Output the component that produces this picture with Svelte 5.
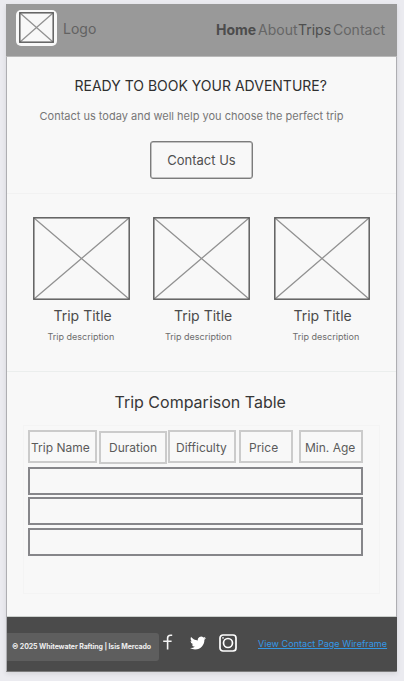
<script>
  const trips = [{ width: 97 }, { width: 97 }, { width: 96 }];
  const columns = ['Trip Name', 'Duration', 'Difficulty', 'Price', 'Min. Age'];
  const rows = [1, 2, 3];
</script>

{#snippet placeholder(w, h)}
  <svg class="ph" width={w} height={h} viewBox="0 0 {w} {h}">
    <path d="M1 1L{w - 1} {h - 1}M{w - 1} 1L1 {h - 1}" stroke="#929292" stroke-width="1.3" />
    <rect x=".8" y=".8" width={w - 1.6} height={h - 1.6} fill="none" stroke="#606060" stroke-width="1.5" />
  </svg>
{/snippet}

<main>
  <header>
    <div class="brand">
      <span class="mark">{@render placeholder(35, 31)}</span>
      <span class="name">Logo</span>
    </div>
    <nav>
      <span class="home">Home</span>
      <span class="about">About</span>
      <span class="trips-link">Trips</span>
      <span class="contact">Contact</span>
    </nav>
  </header>

  <section class="hero">
    <h1>READY TO BOOK YOUR ADVENTURE?</h1>
    <p>Contact us today and well help you choose the perfect trip</p>
    <button>Contact Us</button>
  </section>

  <section class="trips">
    {#each trips as trip, i}
      <article class="trip t{i}">
        {@render placeholder(trip.width, 83)}
        <h2>Trip Title</h2>
        <p>Trip description</p>
      </article>
    {/each}
  </section>

  <section class="compare">
    <h2>Trip Comparison Table</h2>
    <div class="table">
      <div class="head">
        {#each columns as label, i}
          <div class="cell c{i}">{label}</div>
        {/each}
      </div>
      {#each rows as row}
        <div class="row r{row}"></div>
      {/each}
    </div>
  </section>

  <footer>
    <div class="copy">© 2025 Whitewater Rafting | Isis Mercado</div>
    <div class="social">
      <svg class="fb" width="10" height="16" viewBox="0 0 10 16">
        <path d="M9.2 1.2H7.6Q4.6 1.2 4.6 4V15.5M.2 7.2H8.6" fill="none" stroke="#f4f4f4" stroke-width="1.6" />
      </svg>
      <svg class="tw" width="16" height="14" viewBox="0 2 24 20">
        <path fill="#fff" d="M23.95 4.57a10 10 0 01-2.82.77 4.96 4.96 0 002.16-2.72c-.95.55-2 .95-3.13 1.18a4.92 4.92 0 00-8.38 4.48C7.69 8.1 4.07 6.13 1.64 3.16a4.82 4.82 0 00-.67 2.48c0 1.7.87 3.2 2.19 4.09a4.9 4.9 0 01-2.23-.61v.06a4.92 4.92 0 003.95 4.83 5 5 0 01-2.21.08 4.94 4.94 0 004.6 3.42A9.87 9.87 0 010 19.54a13.99 13.99 0 007.56 2.21c9.05 0 14-7.5 14-13.98 0-.21 0-.42-.02-.63a9.94 9.94 0 002.41-2.57z" />
      </svg>
      <svg class="ig" width="18" height="18" viewBox="0 0 18 18">
        <rect x="1" y="1" width="16" height="16" rx="3" fill="none" stroke="#fff" stroke-width="1.7" />
        <circle cx="9" cy="9" r="4.5" fill="none" stroke="#fff" stroke-width="1.7" />
        <circle cx="4" cy="3.9" r=".8" fill="#fff" />
      </svg>
    </div>
    <span class="link">View Contact Page Wireframe</span>
  </footer>
</main>

<style>
  :global(body) { background: #ebebf0; font-family: Inter, "Liberation Sans", sans-serif; }
  main {
    box-sizing: border-box;
    width: 391px;
    height: 668px;
    margin: 0 0 0 6px;
    border: 1px solid #aeaeb2;
    border-top: 0;
    border-bottom: 1px solid #7c7c7c;
    background: #f8f8f8;
    box-shadow: 0 2px 5px #00000018;
    display: flex;
    flex-direction: column;
  }
  :global(#app) { padding-top: 4px; height: 677px; }
  h1, h2, p { margin: 0; font-weight: 400; white-space: nowrap; }
  .ph { display: block; }
  header {
    box-sizing: border-box;
    height: 53px;
    margin: 0 -1px;
    background: #999;
    border-bottom: 1px solid #b9b9b9;
    display: flex;
    justify-content: space-between;
  }
  .brand { display: flex; padding: 6px 0 0 10px; }
  .mark { box-sizing: border-box; width: 41px; height: 36px; padding: 2px 3px; border-radius: 5px; background: #f8f8f8; }
  .name { margin: 9px 0 0 6px; font-size: 14px; line-height: 20px; color: #626262; }
  nav { display: flex; padding: 16px 12px 0 0; font-size: 14px; line-height: 20px; color: #666; }
  nav span { white-space: nowrap; }
  .home { width: 42px; font-weight: 700; color: #4c4c4c; }
  .about { width: 40px; }
  .trips-link { width: 35px; color: #4e4e4e; }
  .contact { width: 52px; }

  .hero { box-sizing: border-box; height: 137px; padding-top: 19px; border-bottom: 1px solid #f2f2f2; }
  .hero h1 { margin-left: 67.5px; font-size: 14px; line-height: 20px; color: #2f2f2f; }
  .hero p { margin: 12px 0 0 32.5px; font-size: 11px; line-height: 16px; color: #767676; }
  button {
    display: block;
    box-sizing: border-box;
    width: 103px;
    height: 38px;
    margin: 17px 0 0 143px;
    padding: 0;
    border: 1px solid #7c7c7c;
    border-radius: 3px;
    box-shadow: inset 0 0 0 .5px #8c8c8c;
    background: #f8f8f8;
    font: 13px/20px Inter, sans-serif;
    color: #505050;
    white-space: nowrap;
  }

  .trips { box-sizing: border-box; height: 178px; padding: 23px 0 0 25.5px; border-bottom: 1px solid #ebeeed; display: flex; gap: 23.5px; }
  .trip { width: 97px; }
  .trip h2 { margin: 6px 0 0 21px; font-size: 14px; line-height: 20px; color: #4b4b4b; }
  .trip p { margin: 5px 0 0 15px; font-size: 9px; line-height: 12px; color: #6d6d6d; }
  .t1 p { margin-left: 12px; }
  .t2 h2 { margin-left: 20px; }
  .t2 p { margin-left: 19px; }

  .compare { box-sizing: border-box; height: 245px; padding: 19px 0 0 16px; border-bottom: 1px solid #ccd0cd; }
  .compare h2 { margin-left: 91.5px; font-size: 16px; line-height: 22px; color: #373737; }
  .table { box-sizing: border-box; width: 357px; height: 169px; margin-top: 12px; padding: 4px 0 0 4px; border: 1px solid #f4f4f4; }
  .head { display: flex; height: 34px; }
  .cell {
    box-sizing: border-box;
    height: 33px;
    border: 2px solid #cbcbcb;
    font-size: 12px;
    line-height: 31px;
    color: #5b5b5b;
    white-space: nowrap;
  }
  .c0 { width: 69px; padding-left: 1px; }
  .c1 { width: 68px; margin: 1px 0 0 2px; padding-left: 8px; line-height: 29px; }
  .c2 { width: 68px; margin-left: 1px; padding-left: 6px; }
  .c3 { width: 54px; margin-left: 3px; padding-left: 8px; }
  .c4 { width: 64px; margin-left: 6px; padding-left: 4px; }
  .row { box-sizing: border-box; width: 335px; height: 28px; margin-top: 3px; border: 2px solid #86868a; }
  .r2 { margin-top: 2px; }

  footer { height: 54px; background: #4b4b4b; margin-right: -1px; display: flex; }
  .copy {
    box-sizing: border-box;
    width: 152px;
    height: 28px;
    margin-top: 16px;
    padding-left: 5px;
    border-radius: 0 3px 3px 0;
    background: #5e5e5e;
    font-size: 7px;
    font-weight: 700;
    letter-spacing: -.1px;
    line-height: 27px;
    color: #eee;
    white-space: nowrap;
  }
  .social { display: flex; padding-left: 4px; }
  .fb { margin-top: 17px; }
  .tw { margin: 19px 0 0 17px; }
  .ig { margin: 17px 0 0 13px; }
  .link { margin: 20px 0 0 21px; font-size: 9px; letter-spacing: .045px; line-height: 14px; color: #3498e6; text-decoration: underline; white-space: nowrap; }
</style>
